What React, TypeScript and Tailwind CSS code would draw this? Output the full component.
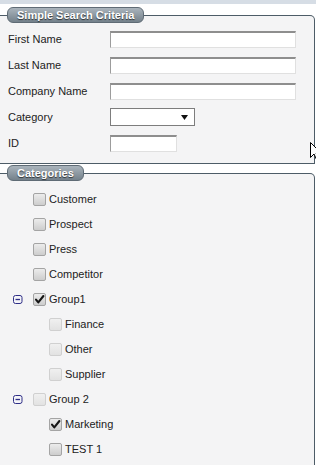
import React from "react";

function Box({ checked, disabled }: { checked?: boolean; disabled?: boolean }) {
  return (
    <span
      className={
        disabled
          ? "flex h-[13px] w-[13px] shrink-0 items-center justify-center rounded-[2px] border border-[#d0d0d0] bg-linear-to-b from-[#f0f0f0] to-[#e2e2e2]"
          : "flex h-[13px] w-[13px] shrink-0 items-center justify-center rounded-[2px] border border-[#a4a4a4] bg-linear-to-b from-[#ececec] to-[#cdcdcd]"
      }
    >
      {checked && (
        <svg width="11" height="11" viewBox="0 0 11 11">
          <path d="M2 5.6 L4.3 8.4 L9.4 2" fill="none" stroke="#151515" strokeWidth="2.1" strokeLinecap="round" strokeLinejoin="round" />
        </svg>
      )}
    </span>
  );
}

function Collapse() {
  return (
    <svg width="10" height="9" viewBox="0 0 10 9">
      <rect x="0.5" y="0.5" width="8.5" height="8" rx="2" fill="#f4f4f8" stroke="#2f2f86" strokeWidth="1" />
      <line x1="2.5" y1="4.5" x2="7" y2="4.5" stroke="#2f2f86" strokeWidth="1.3" />
    </svg>
  );
}

type Item = { label: string; level: number; group?: boolean; checked?: boolean; disabled?: boolean };

const items: Item[] = [
  { label: "Customer", level: 0 },
  { label: "Prospect", level: 0 },
  { label: "Press", level: 0 },
  { label: "Competitor", level: 0 },
  { label: "Group1", level: 0, group: true, checked: true },
  { label: "Finance", level: 1, disabled: true },
  { label: "Other", level: 1, disabled: true },
  { label: "Supplier", level: 1, disabled: true },
  { label: "Group 2", level: 0, group: true, disabled: true },
  { label: "Marketing", level: 1, checked: true },
  { label: "TEST 1", level: 1 },
];

const inputCls =
  "h-[17px] bg-white border-t-2 border-l border-r border-b border-t-[#8e8e8e] border-l-[#9c9c9c] border-r-[#e0e0e0] border-b-[#e0e0e0]";

const legendCls =
  "ml-[-1px] h-[16px] rounded-[6px] border border-[#5f6b75] bg-linear-to-b from-[#aab4bc] to-[#74818b] px-[9px] text-[11px] font-bold leading-[14px] text-white [text-shadow:0_1px_1px_rgba(0,0,0,0.65)]";

export default function App() {
  return (
    <div className="relative h-[465px] w-[316px] overflow-hidden bg-white font-['Liberation_Sans',Arial,sans-serif] text-[11px] text-[#222]">
      <div className="h-[4px] bg-[#d6dde5]" />
      <fieldset className="mt-[3px] w-[315px] rounded-tr-[5px] border border-l-0 border-[#4d5c67] bg-[#f4f4f5] pb-[7px] pl-[8px] pt-[3px]">
        <legend className={legendCls}>Simple Search Criteria</legend>
        <div className="flex h-[26px] items-center">
          <span className="w-[102px]">First Name</span>
          <div className={inputCls + " w-[186px]"} />
        </div>
        <div className="flex h-[26px] items-center">
          <span className="w-[102px]">Last Name</span>
          <div className={inputCls + " w-[186px]"} />
        </div>
        <div className="flex h-[26px] items-center">
          <span className="w-[102px]">Company Name</span>
          <div className={inputCls + " w-[186px]"} />
        </div>
        <div className="flex h-[26px] items-center">
          <span className="w-[102px]">Category</span>
          <div className="flex h-[18px] w-[85px] items-center justify-end border border-[#7d7d7d] bg-white pr-[6px]">
            <svg width="7" height="5" viewBox="0 0 7 5">
              <path d="M0 0 L7 0 L3.5 5 Z" fill="#111" />
            </svg>
          </div>
        </div>
        <div className="flex h-[26px] items-center">
          <span className="w-[102px]">ID</span>
          <div className={inputCls + " w-[67px]"} />
        </div>
      </fieldset>

      <fieldset className="mt-[1px] w-[315px] rounded-tr-[5px] border border-l-0 border-[#4d5c67] bg-[#f4f4f5] pb-[10px] pl-[8px] pt-[6px]">
        <legend className={legendCls}>Categories</legend>
        {items.map((it) => (
          <div key={it.label} className="flex h-[25px] items-center">
            <span className={it.level === 1 ? "w-[41px] shrink-0" : "flex w-[25px] shrink-0 items-center pl-[5px]"}>
              {it.group && <Collapse />}
            </span>
            <Box checked={it.checked} disabled={it.disabled} />
            <span className="ml-[3px]">{it.label}</span>
          </div>
        ))}
      </fieldset>

      <svg className="absolute left-[310px] top-[142px]" width="12" height="20" viewBox="0 0 12 20">
        <path d="M0.5 0.5 L0.5 15.5 L4 12 L6.5 17.5 L8.5 16.5 L6 11 L11 11 Z" fill="#fff" stroke="#000" strokeWidth="1" />
      </svg>
    </div>
  );
}
